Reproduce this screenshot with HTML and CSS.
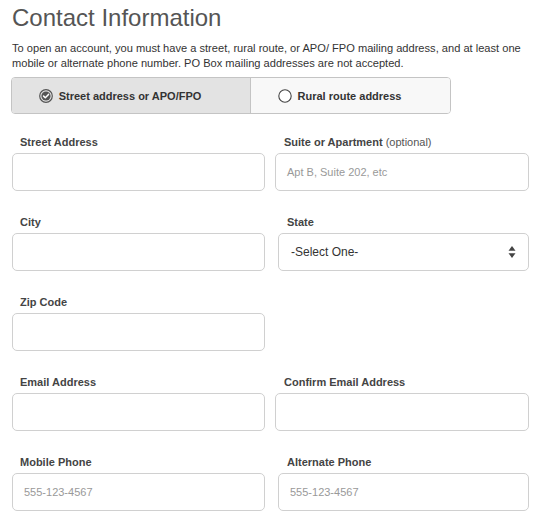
FILE: index.html
```html
<!DOCTYPE html>
<html>
<head>
<meta charset="utf-8">
<link rel="stylesheet" href="styles.css">
</head>
<body>
<div class="page">
  <h1 class="title">Contact Information</h1>
  <p class="intro">To open an account, you must have a street, rural route, or APO/ FPO mailing address, and at least one mobile or alternate phone number. PO Box mailing addresses are not accepted.</p>
  <div class="segment">
    <div class="seg seg-on">
      <svg class="radio" width="14" height="14" viewBox="0 0 14 14"><circle cx="7" cy="7" r="6.3" fill="none" stroke="#555" stroke-width="1.2"/><circle cx="7" cy="7" r="4.6" fill="#555"/><path d="M4.6 7.1 L6.3 8.8 L9.5 5.4" fill="none" stroke="#fff" stroke-width="1.5" stroke-linecap="round" stroke-linejoin="round"/></svg>
      <span>Street address or APO/FPO</span>
    </div>
    <div class="seg seg-off">
      <svg class="radio" width="14" height="14" viewBox="0 0 14 14"><circle cx="7" cy="7" r="6.2" fill="#fff" stroke="#444" stroke-width="1.1"/></svg>
      <span>Rural route address</span>
    </div>
  </div>
  <div class="grid">
    <div class="field">
      <label class="lbl">Street Address</label>
      <div class="box"></div>
    </div>
    <div class="field">
      <label class="lbl lbl-in">Suite or Apartment <span class="opt">(optional)</span></label>
      <div class="box"><span class="ph">Apt B, Suite 202, etc</span></div>
    </div>
    <div class="field">
      <label class="lbl">City</label>
      <div class="box"></div>
    </div>
    <div class="field shift">
      <label class="lbl lbl-in">State</label>
      <div class="box select"><span class="val">-Select One-</span><span class="arrows"><svg width="8" height="14" viewBox="0 0 8 14"><path d="M4 1 L7.5 5.8 L0.5 5.8 Z" fill="#444"/><path d="M4 13 L7.5 8.2 L0.5 8.2 Z" fill="#444"/></svg></span></div>
    </div>
    <div class="field">
      <label class="lbl">Zip Code</label>
      <div class="box"></div>
    </div>
    <div class="field empty"></div>
    <div class="field">
      <label class="lbl">Email Address</label>
      <div class="box"></div>
    </div>
    <div class="field">
      <label class="lbl lbl-in">Confirm Email Address</label>
      <div class="box"></div>
    </div>
    <div class="field">
      <label class="lbl">Mobile Phone</label>
      <div class="box"><span class="ph">555-123-4567</span></div>
    </div>
    <div class="field shift">
      <label class="lbl lbl-in">Alternate Phone</label>
      <div class="box"><span class="ph">555-123-4567</span></div>
    </div>
  </div>
</div>
</body>
</html>
```
FILE: styles.css
```css
* { box-sizing: border-box; }
html, body { margin: 0; padding: 0; background: #fff; }
body {
  font-family: "Liberation Sans", Arial, Helvetica, sans-serif;
  color: #333;
}
.page {
  padding: 4px 0 0 12px;
}
.title {
  margin: 0;
  font-size: 24px;
  line-height: 28px;
  font-weight: 400;
  color: #555;
  letter-spacing: 0;
}
.intro {
  margin: 9px 0 0 0;
  font-size: 11.1px;
  line-height: 15px;
  color: #333;
  width: 530px;
}
.segment {
  margin: 6px 0 0 -1px;
  display: flex;
  width: 440px;
  height: 37px;
  border: 1px solid #c4c4c4;
  border-radius: 4px;
  overflow: hidden;
}
.seg {
  display: flex;
  align-items: center;
  justify-content: center;
  gap: 6px;
  font-size: 11px;
  font-weight: 700;
  color: #333;
  padding-right: 22px;
}
.seg-on {
  width: 239px;
  background: #e3e3e3;
  border-right: 1px solid #c4c4c4;
}
.seg-off {
  flex: 1;
  background: #f8f8f8;
}
.radio { flex: none; }
.grid {
  margin-top: 21px;
  display: grid;
  grid-template-columns: 253px 254px;
  column-gap: 10px;
}
.field {
  height: 80px;
}
.shift { margin-left: 3px; }
.lbl {
  display: block;
  height: 14px;
  line-height: 14px;
  font-size: 11px;
  font-weight: 700;
  color: #444;
  padding-left: 8px;
  margin-bottom: 4px;
}
.lbl-in { padding-left: 9px; }
.opt { font-weight: 400; color: #555; }
.box {
  height: 38px;
  border: 1px solid #d0d0d0;
  border-radius: 5px;
  background: #fff;
  display: flex;
  align-items: center;
  padding-left: 11px;
}
.ph {
  font-size: 11px;
  color: #999;
}
.select {
  justify-content: space-between;
  padding: 0 12px 0 12px;
}
.val {
  font-size: 12px;
  color: #333;
}
.arrows { display: flex; align-items: center; }
```
